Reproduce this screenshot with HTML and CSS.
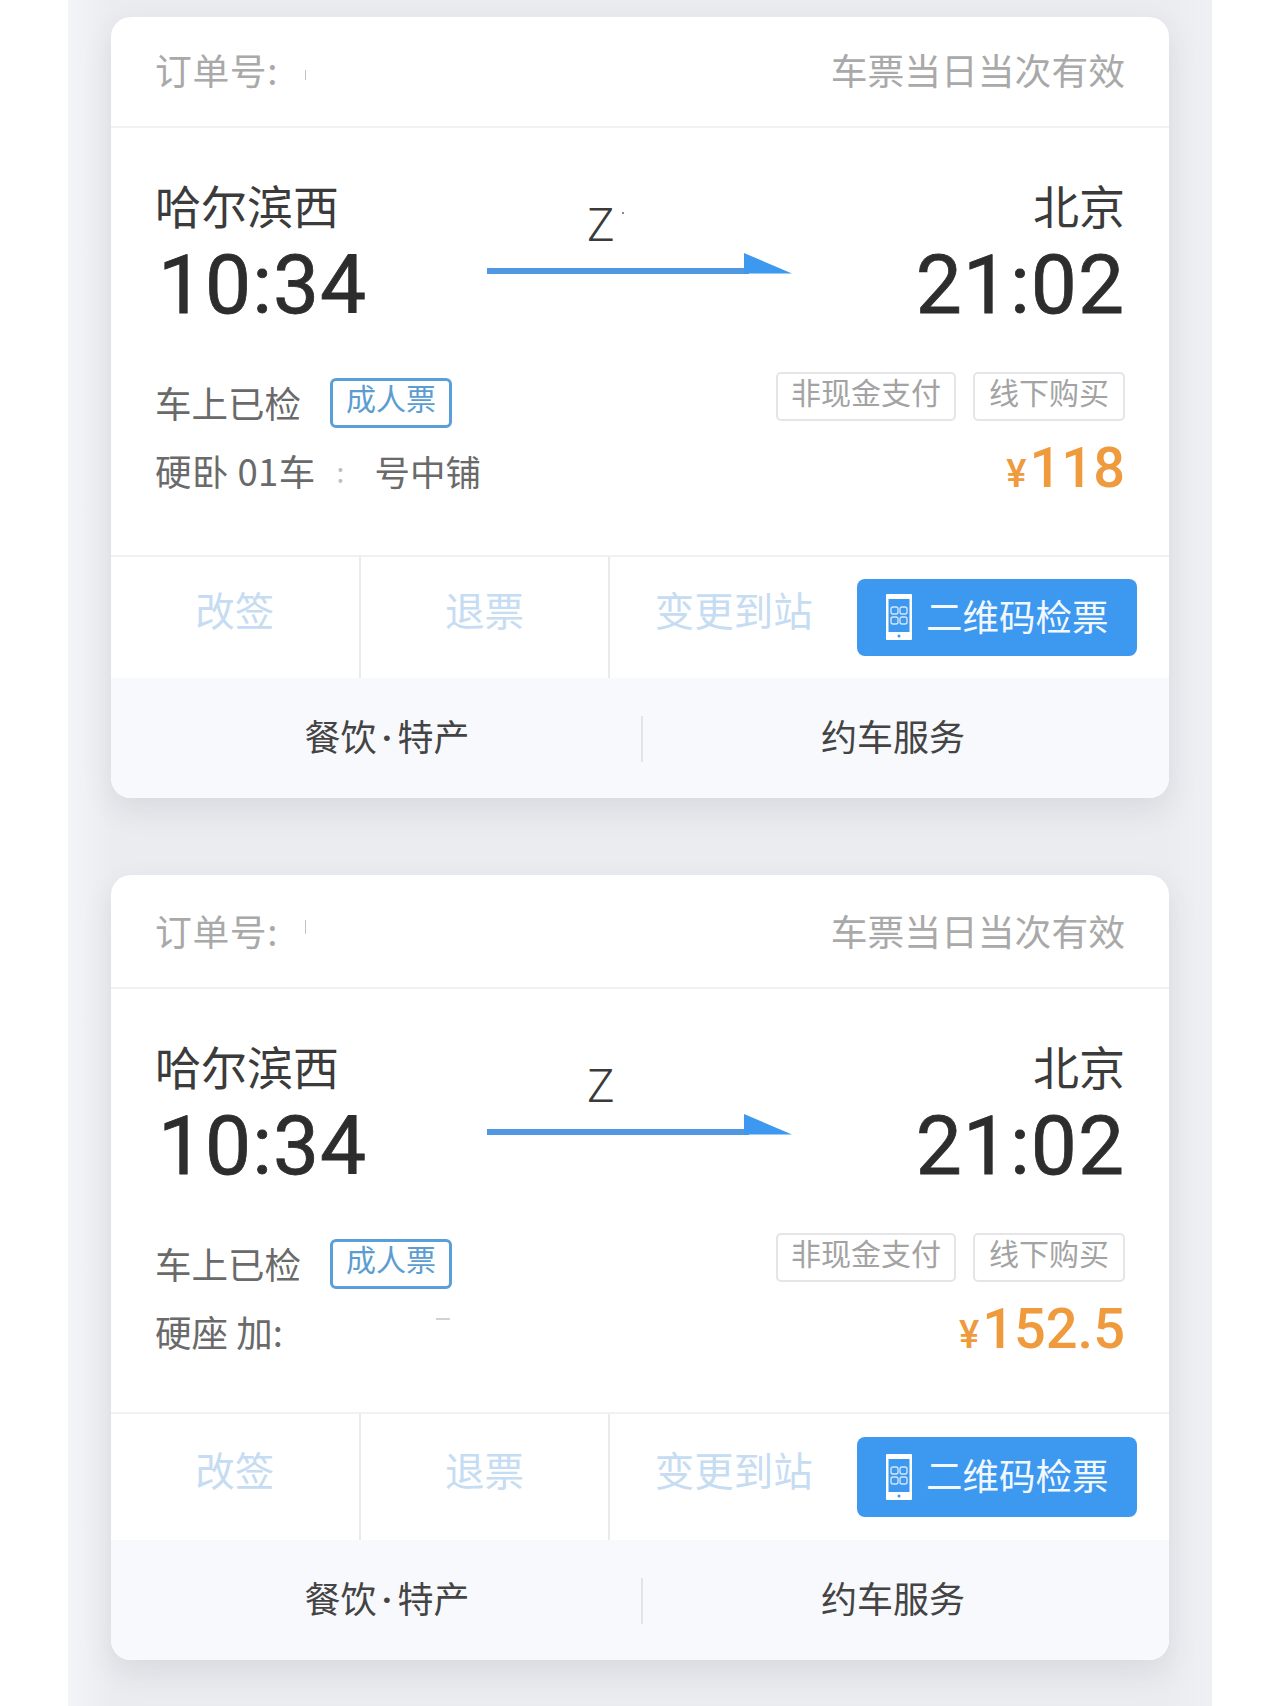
FILE: index.html
```html
<!DOCTYPE html>
<html lang="zh-CN">
<head>
<meta charset="utf-8">
<title>车票</title>
<link rel="stylesheet" href="styles.css">
</head>
<body>
<main class="panel">
  <section class="card">
    <header class="card-head">
      <span class="order">订单号: <i class="mark"></i></span>
      <span>车票当日当次有效</span>
    </header>
    <div class="card-main">
      <div class="route">
        <div class="stop">
          <div class="station">哈尔滨西</div>
          <div class="time">10:34</div>
        </div>
        <div class="train">
          <div class="train-no">Z<i class="dot"></i></div>
          <svg class="arrow" viewBox="0 0 305 21" aria-hidden="true">
            <rect x="0" y="15" width="262" height="6" fill="#5297e2"/>
            <path d="M257 0L305 20.500H257Z" fill="#3d98f0"/>
          </svg>
        </div>
        <div class="stop stop-end">
          <div class="station">北京</div>
          <div class="time">21:02</div>
        </div>
      </div>
      <div class="info">
        <div class="status">
          <span>车上已检</span>
          <span class="badge">成人票</span>
        </div>
        <div class="tags">
          <span class="tag tag-pay">非现金支付</span>
          <span class="tag">线下购买</span>
        </div>
      </div>
      <div class="seat-row">
        <div class="seat"><span class="seat-a">硬卧 01车</span><span class="seat-b">:</span><span class="seat-c">号中铺</span></div>
        <div class="price"><span class="yen">¥</span>118</div>
      </div>
    </div>
    <nav class="actions">
      <a class="action">改签</a>
      <a class="action">退票</a>
      <a class="action">变更到站</a>
      <button class="qr-btn" type="button">
        <svg class="phone" viewBox="0 0 26 46" aria-hidden="true">
          <path fill="#fff" fill-rule="evenodd" d="M1 0H25a1 1 0 0 1 1 1V45a1 1 0 0 1-1 1H1a1 1 0 0 1-1-1V1a1 1 0 0 1 1-1ZM2.500 5V38H23.500V5Z"/>
          <circle cx="13" cy="42" r="1.500" fill="#3d98f0"/>
          <g fill="none" stroke="#d5e8fb" stroke-width="1.300">
            <rect x="5" y="13" width="7" height="7" rx="2"/>
            <rect x="14" y="13" width="7" height="7" rx="2"/>
            <rect x="5" y="23" width="7" height="7" rx="2"/>
            <rect x="14" y="23" width="7" height="7" rx="2"/>
          </g>
        </svg>
        <span class="qr-label">二维码检票</span>
      </button>
    </nav>
    <footer class="services">
      <a class="service service-food">餐饮<span class="mid">·</span>特产</a>
      <a class="service service-car">约车服务</a>
    </footer>
  </section>

  <section class="card card-second">
    <header class="card-head">
      <span class="order">订单号: <i class="mark"></i></span>
      <span>车票当日当次有效</span>
    </header>
    <div class="card-main">
      <div class="route">
        <div class="stop">
          <div class="station">哈尔滨西</div>
          <div class="time">10:34</div>
        </div>
        <div class="train">
          <div class="train-no">Z</div>
          <svg class="arrow" viewBox="0 0 305 21" aria-hidden="true">
            <rect x="0" y="15" width="262" height="6" fill="#5297e2"/>
            <path d="M257 0L305 20.500H257Z" fill="#3d98f0"/>
          </svg>
        </div>
        <div class="stop stop-end">
          <div class="station">北京</div>
          <div class="time">21:02</div>
        </div>
      </div>
      <div class="info">
        <div class="status">
          <span>车上已检</span>
          <span class="badge">成人票</span>
        </div>
        <div class="tags">
          <span class="tag tag-pay">非现金支付</span>
          <span class="tag">线下购买</span>
        </div>
      </div>
      <div class="seat-row">
        <div class="seat"><span>硬座 加:</span><i class="dash"></i></div>
        <div class="price"><span class="yen">¥</span>152.5</div>
      </div>
    </div>
    <nav class="actions">
      <a class="action">改签</a>
      <a class="action">退票</a>
      <a class="action">变更到站</a>
      <button class="qr-btn" type="button">
        <svg class="phone" viewBox="0 0 26 46" aria-hidden="true">
          <path fill="#fff" fill-rule="evenodd" d="M1 0H25a1 1 0 0 1 1 1V45a1 1 0 0 1-1 1H1a1 1 0 0 1-1-1V1a1 1 0 0 1 1-1ZM2.500 5V38H23.500V5Z"/>
          <circle cx="13" cy="42" r="1.500" fill="#3d98f0"/>
          <g fill="none" stroke="#d5e8fb" stroke-width="1.300">
            <rect x="5" y="13" width="7" height="7" rx="2"/>
            <rect x="14" y="13" width="7" height="7" rx="2"/>
            <rect x="5" y="23" width="7" height="7" rx="2"/>
            <rect x="14" y="23" width="7" height="7" rx="2"/>
          </g>
        </svg>
        <span class="qr-label">二维码检票</span>
      </button>
    </nav>
    <footer class="services">
      <a class="service service-food">餐饮<span class="mid">·</span>特产</a>
      <a class="service service-car">约车服务</a>
    </footer>
  </section>
</main>
</body>
</html>
```

FILE: styles.css
```css
* { box-sizing: border-box; }

html, body { margin: 0; background: #fff; }

body {
  font-family: "Noto Sans CJK SC", "Noto Sans", sans-serif;
  color: #333;
}

.panel {
  margin-left: 68px;
  width: 1144px;
  height: 1706px;
  padding: 17px 43px 0 43px;
  background: linear-gradient(90deg, #f3f4f8 0, #ebecf0 4%, #ebecf0 96%, #eff0f4 100%);
  overflow: hidden;
  display: flex;
  flex-direction: column;
  gap: 77px;
}

.card {
  width: 1058px;
  background: #fff;
  border-radius: 20px;
  overflow: hidden;
  flex: none;
  box-shadow: 0 12px 30px rgba(60, 62, 75, 0.1);
}

.card-head {
  height: 111px;
  padding: 0 44px 6px 44px;
  border-bottom: 2px solid #f1f1f3;
  display: flex;
  justify-content: space-between;
  align-items: center;
  font-size: 36.800px;
  color: #a9a9a9;
}

.card-second .card-head { height: 114px; padding-bottom: 2px; }

.order { display: flex; align-items: center; letter-spacing: 0.6px; }

.mark {
  width: 1px;
  height: 10px;
  margin: 12px 0 0 27px;
  background: #c2c2c2;
}

.card-second .mark { margin-top: -6px; height: 14px; }

.card-main {
  height: 427px;
  padding: 48px 44px 0 44px;
}

.card-second .card-main { height: 423px; }

.route { display: flex; }

.stop { width: 332px; flex: none; }

.stop-end { flex: 1; text-align: right; }

.station {
  font-size: 46px;
  line-height: 56px;
  color: #3b3b3b;
}

.time {
  font-family: Roboto, sans-serif;
  font-weight: 400;
  -webkit-text-stroke: 0.8px #2d2d2d;
  font-size: 82px;
  line-height: 80px;
  letter-spacing: 1px;
  margin-top: 13px;
  padding-left: 3px;
  color: #2d2d2d;
}

.train {
  width: 305px;
  flex: none;
  padding-top: 26px;
}

.train-no {
  position: relative;
  font-family: Roboto, sans-serif;
  font-weight: 300;
  font-size: 46px;
  line-height: 46px;
  padding-left: 100px;
  color: #3a3a3a;
}

.dot {
  position: absolute;
  left: 135px;
  top: 10px;
  width: 2px;
  height: 2px;
  background: #8a8a8a;
}

.arrow {
  display: block;
  width: 305px;
  height: 21px;
  margin-top: 5px;
}

.info {
  display: flex;
  justify-content: space-between;
  margin-top: 47px;
  height: 56px;
}

.status {
  display: flex;
  align-items: center;
  align-self: flex-end;
  gap: 29px;
  font-size: 36.500px;
  line-height: 50px;
  color: #6a6a6a;
}

.badge {
  width: 122px;
  height: 50px;
  border: 3px solid #5a9fd8;
  border-radius: 6px;
  font-size: 30px;
  line-height: 32px;
  text-align: center;
  color: #5c9dd1;
}

.tags { display: flex; gap: 17px; }

.tag {
  width: 152px;
  height: 49px;
  border: 2px solid #e5e5e7;
  border-radius: 5px;
  font-size: 30px;
  line-height: 34px;
  text-align: center;
  color: #a3a3a3;
}

.tag-pay { width: 180px; }

.seat-row {
  display: flex;
  justify-content: space-between;
  margin-top: 10px;
}

.seat {
  display: flex;
  align-items: center;
  height: 44px;
  margin-top: 11px;
  font-size: 36.500px;
  line-height: 44px;
  color: #6a6a6a;
}

.seat-a { letter-spacing: 0.4px; }

.seat-b { margin: 0 30px 0 21px; color: #bdbdbd; font-size: 28px; }

.seat-c { font-size: 35.500px; }

.dash {
  width: 14px;
  height: 2px;
  margin: -26px 0 0 153px;
  background: #d2d2d2;
}

.price {
  font-family: Roboto, sans-serif;
  font-weight: 500;
  font-size: 56px;
  line-height: 60px;
  color: #ee9a3d;
}

.yen { font-size: 38px; margin-right: 3px; }

.actions {
  height: 123px;
  padding-right: 32px;
  border-top: 2px solid #f1f1f3;
  display: flex;
  align-items: stretch;
}

.card-second .actions { height: 128px; }

.action {
  width: 250px;
  padding-top: 25px;
  border-right: 2px solid #eaeaec;
  font-size: 39.500px;
  line-height: 54px;
  text-align: center;
  color: #c6dcf2;
}

.card-second .action { padding-top: 28px; }

.action:nth-child(3) { width: 247px; border-right: 0; }

.qr-btn {
  flex: none;
  align-self: center;
  width: 280px;
  height: 77px;
  margin: 0 0 1px;
  padding: 0 0 0 29px;
  border: 0;
  border-radius: 8px;
  background: #3d98f0;
  display: flex;
  align-items: center;
  gap: 14px;
  font-family: inherit;
  font-size: 36.500px;
  color: #f3f8fe;
}

.card-second .qr-btn { height: 80px; }

.qr-label { margin-bottom: 4px; }

.phone { width: 26px; height: 46px; flex: none; }

.services {
  height: 120px;
  padding-bottom: 6px;
  background: #f8f9fc;
  display: flex;
  align-items: center;
  font-size: 36px;
  color: #444;
}

.service { text-align: center; line-height: 44px; }

.service-food {
  width: 532px;
  padding: 4px 0 0 20px;
  position: relative;
}

.service-food::after {
  content: "";
  position: absolute;
  right: 0;
  top: 7px;
  width: 2px;
  height: 46px;
  background: #e3e4e8;
}

.service-car { flex: 1; padding-right: 26px; }

.mid { font-family: Roboto, sans-serif; font-weight: 700; margin: 0 5px; }
```
